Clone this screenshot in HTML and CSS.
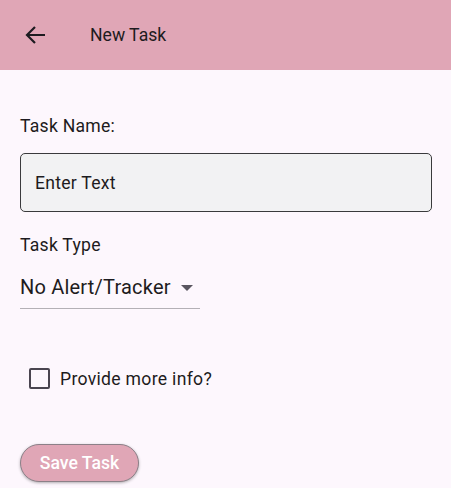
FILE: index.html
```html
<!DOCTYPE html>
<html>
<head>
<meta charset="utf-8">
<link rel="stylesheet" href="styles.css">
</head>
<body>
<header class="appbar">
  <button class="back" aria-label="Back">
    <svg width="22" height="22" viewBox="0 0 22 22"><path d="M21 11H3M11 3L3 11L11 19" fill="none" stroke="#1d1b20" stroke-width="2.2"/></svg>
  </button>
  <h1 class="title">New Task</h1>
</header>
<main class="content">
  <label class="label name-label">Task Name:</label>
  <div class="field"><span>Enter Text</span></div>
  <label class="label type-label">Task Type</label>
  <div class="dropdown">
    <span class="dd-text">No Alert/Tracker</span>
    <span class="dd-arrow"></span>
  </div>
  <div class="check-row">
    <span class="checkbox"></span>
    <span class="check-label">Provide more info?</span>
  </div>
  <button class="save">Save Task</button>
</main>
</body>
</html>
```
FILE: styles.css
```css
* { box-sizing: border-box; }
html, body { margin: 0; padding: 0; }
body {
  background: #fdf7fd;
  font-family: Roboto, "Noto Sans", sans-serif;
  color: #1d1b20;
  width: 451px;
  height: 488px;
  overflow: hidden;
}
.appbar {
  height: 70px;
  background: #e0a6b6;
  display: flex;
  align-items: center;
}
.back {
  border: 0;
  background: none;
  padding: 0;
  margin-left: 24px;
  width: 22px;
  height: 22px;
  display: flex;
}
.title {
  margin: 0 0 0 44px;
  font-size: 17.6px;
  font-weight: 400;
  line-height: 20px;
}
.content {
  padding: 0 20px;
  display: flex;
  flex-direction: column;
  align-items: flex-start;
}
.label {
  font-size: 17.6px;
  line-height: 20px;
  letter-spacing: 0.25px;
}
.name-label { margin-top: 46px; }
.field {
  margin-top: 17px;
  width: 412px;
  height: 59px;
  border: 1.3px solid #3a3a3c;
  border-radius: 5px;
  background: #f2f2f3;
  display: flex;
  align-items: center;
  padding-left: 14px;
  font-size: 17.6px;
  letter-spacing: 0.25px;
}
.type-label { margin-top: 23px; }
.dropdown {
  margin-top: 20px;
  width: 180px;
  height: 34px;
  border-bottom: 1px solid #b4b0b6;
  display: flex;
  align-items: flex-start;
}
.dd-text {
  font-size: 20px;
  line-height: 24px;
  letter-spacing: 0.2px;
}
.dd-arrow {
  margin-left: 10px;
  margin-top: 10px;
  width: 0; height: 0;
  border-left: 6px solid transparent;
  border-right: 6px solid transparent;
  border-top: 6px solid #5a5660;
}
.check-row {
  margin-top: 59px;
  margin-left: 9px;
  display: flex;
  align-items: center;
}
.checkbox {
  width: 21px;
  height: 21px;
  border: 2.5px solid #4a4550;
  border-radius: 2px;
}
.check-label {
  margin-left: 10px;
  font-size: 17.6px;
  line-height: 20px;
  letter-spacing: 0.3px;
}
.save {
  margin-top: 55px;
  width: 119px;
  height: 38px;
  border-radius: 19px;
  background: #e0a6b6;
  border: 1.3px solid #8c8088;
  color: #fff;
  font-family: Roboto, "Noto Sans", sans-serif;
  font-size: 17.6px;
  font-weight: 500;
  box-shadow: 0 1px 3px rgba(0,0,0,0.3);
  padding: 0;
}
```
